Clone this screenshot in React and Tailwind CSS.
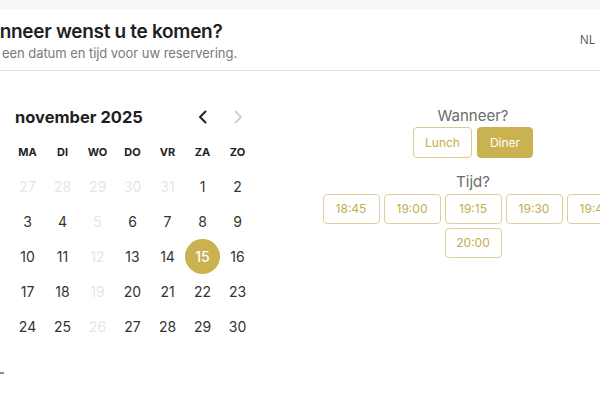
import { useState } from "react";

const weekdays = ["MA", "DI", "WO", "DO", "VR", "ZA", "ZO"];

// november 2025, starting on monday 27 october
const days = [
  [27, true], [28, true], [29, true], [30, true], [31, true], [1], [2],
  [3], [4], [5, true], [6], [7], [8], [9],
  [10], [11], [12, true], [13], [14], [15], [16],
  [17], [18], [19, true], [20], [21], [22], [23],
  [24], [25], [26, true], [27], [28], [29], [30],
];

const times = ["18:45", "19:00", "19:15", "19:30", "19:45", "20:00"];

function Chevron({ dir, className }) {
  return (
    <svg width="16" height="16" viewBox="0 0 16 16" fill="none" className={className}>
      <path
        d={dir === "left" ? "M10.5 2.5 5 8l5.5 5.5" : "M5.5 2.5 11 8l-5.5 5.5"}
        stroke="currentColor"
        strokeWidth="2"
        strokeLinecap="round"
        strokeLinejoin="round"
      />
    </svg>
  );
}

export default function App() {
  const [selected, setSelected] = useState(15);
  const [meal, setMeal] = useState("Diner");

  return (
    <div className="w-[600px] h-[400px] overflow-hidden bg-white font-['Inter',sans-serif]">
      <div className="h-[9px] bg-[#f8f8f8]" />
      <header className="h-[62px] border-b border-[#e3e3e3] flex justify-between">
        <div className="pt-[11px] whitespace-nowrap">
          <h1 className="-ml-[29px] text-[19px] leading-[24px] font-semibold text-[#1f1f1f] tracking-[-0.3px]">
            Wanneer wenst u te komen?
          </h1>
          <p className="-ml-[28px] text-[13px] leading-[18px] text-[#7a7a7a] tracking-[-0.05px]">
            Kies een datum en tijd voor uw reservering.
          </p>
        </div>
        <span className="pt-[22px] pr-[5px] text-[12px] leading-[18px] text-[#555] font-['Open_Sans',sans-serif]">
          NL
        </span>
      </header>

      <main className="flex">
        <section className="w-[346px] shrink-0 pt-[34px] pl-[10px]">
          <div className="w-[245px] flex items-center h-[24px]">
            <h2 className="pl-[5px] text-[16.5px] font-bold text-[#1f1f1f]">
              november 2025
            </h2>
            <div className="ml-auto flex">
              <button className="w-[35px] flex justify-center text-[#222]">
                <Chevron dir="left" />
              </button>
              <button className="w-[35px] flex justify-center text-[#cfcfcf]">
                <Chevron dir="right" />
              </button>
            </div>
          </div>

          <div className="mt-[8px] grid grid-cols-[repeat(7,35px)] h-[30px] items-center">
            {weekdays.map((d) => (
              <span key={d} className="text-center text-[11px] font-bold text-[#222]">
                {d}
              </span>
            ))}
          </div>

          <div className="mt-[2px] grid grid-cols-[repeat(7,35px)] auto-rows-[35px]">
            {days.map(([n, off], i) => {
              const active = !off && i > 5 && n === selected;
              return (
                <button
                  key={i}
                  onClick={() => !off && i > 4 && setSelected(n)}
                  className={`flex items-center justify-center rounded-full text-[14px] ${
                    off
                      ? "text-[#e6e6e6]"
                      : active
                      ? "bg-[#c9b24f] text-white font-medium"
                      : "text-[#333]"
                  }`}
                >
                  {n}
                </button>
              );
            })}
          </div>

          <div className="-ml-[10px] mt-[28px] w-[4px] h-[2px] bg-[#8a8a8a]" />
        </section>

        <section className="flex-1 min-w-0 flex flex-col items-center pt-[35px]">
          <p className="text-[15px] leading-[20px] text-[#6b6b6b]">Wanneer?</p>
          <div className="mt-[1px] flex gap-[5px]">
            {["Lunch", "Diner"].map((m) => (
              <button
                key={m}
                onClick={() => setMeal(m)}
                className={`h-[31px] rounded-[4px] text-[12px] border ${
                  m === "Lunch" ? "w-[59px]" : "w-[56px]"
                } ${
                  meal === m
                    ? "bg-[#c9b24f] border-[#c9b24f] text-white"
                    : "border-[#d9cb8c] text-[#c4ad4b]"
                }`}
              >
                {m}
              </button>
            ))}
          </div>

          <p className="mt-[14px] text-[15px] leading-[20px] text-[#6b6b6b]">Tijd?</p>
          <div className="mt-[2px] w-[301px] shrink-0 flex flex-wrap justify-center gap-[4px]">
            {times.map((t) => (
              <button
                key={t}
                className="w-[57px] h-[30px] rounded-[4px] border border-[#ddd09a] text-[12px] text-[#c4ad4b]"
              >
                {t}
              </button>
            ))}
          </div>
        </section>
      </main>
    </div>
  );
}
